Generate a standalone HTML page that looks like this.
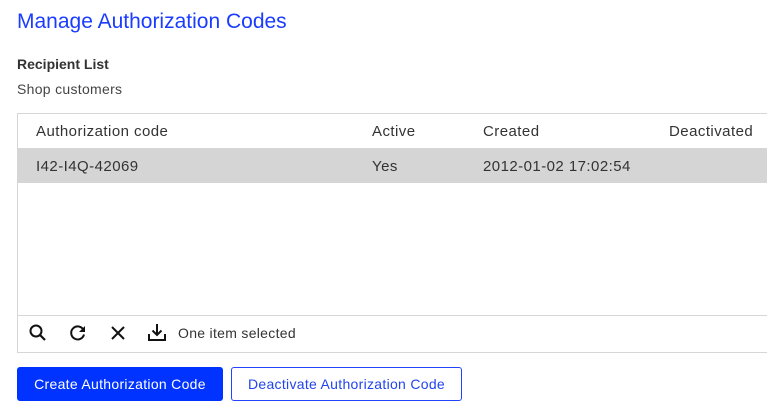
<!DOCTYPE html>
<html><head><style>
body{margin:0;width:767px;height:415px;background:#fff;font-family:"Liberation Sans",sans-serif;color:#333;position:relative;overflow:hidden}
.a{position:absolute;white-space:nowrap}
.t{font-size:15px;letter-spacing:0.45px}
</style></head><body>
<div class="a" style="left:17px;top:10px;font-size:21px;color:#1a3cff">Manage Authorization Codes</div>
<div class="a" style="left:17px;top:56px;font-size:14px;font-weight:bold;color:#333">Recipient List</div>
<div class="a" style="left:17px;top:81px;font-size:14px;letter-spacing:0.3px;color:#444">Shop customers</div>
<div class="a" style="left:17px;top:113px;width:760px;height:238px;border:1px solid #d6d6d6"></div>
<div class="a" style="left:18px;top:148px;width:760px;height:35px;background:#d5d5d5"></div>
<div class="a" style="left:18px;top:315px;width:760px;height:1px;background:#d6d6d6"></div>
<div class="a t" style="left:36px;top:123px">Authorization code</div>
<div class="a t" style="left:372px;top:123px">Active</div>
<div class="a t" style="left:483px;top:123px">Created</div>
<div class="a t" style="left:669px;top:123px">Deactivated</div>
<div class="a t" style="left:36px;top:158px">I42-I4Q-42069</div>
<div class="a t" style="left:372px;top:158px">Yes</div>
<div class="a t" style="left:483px;top:158px">2012-01-02 17:02:54</div>
<svg class="a" style="left:28px;top:323px" width="20" height="20" viewBox="0 0 20 20"><circle cx="8" cy="8" r="5.5" fill="none" stroke="#111" stroke-width="2"/><path d="M12 12l5 5" stroke="#111" stroke-width="2.2"/></svg>
<svg class="a" style="left:68px;top:323px" width="20" height="20" viewBox="0 0 20 20"><path d="M15.5 7A6.5 6.5 0 1 0 16 11.5" fill="none" stroke="#111" stroke-width="2"/><path d="M17 3v6h-6z" fill="#111"/></svg>
<svg class="a" style="left:108px;top:323px" width="20" height="20" viewBox="0 0 20 20"><path d="M4 4l12 12M16 4L4 16" stroke="#111" stroke-width="2"/></svg>
<svg class="a" style="left:147px;top:322px" width="20" height="20" viewBox="0 0 20 20"><path d="M2 12v6h16v-6M10 2v11M5.5 8.5L10 13l4.5-4.5" fill="none" stroke="#111" stroke-width="2"/></svg>
<div class="a" style="left:178px;top:325px;font-size:14px;letter-spacing:0.3px">One item selected</div>
<div class="a" style="left:17px;top:367px;width:206px;height:34px;background:#0033ff;border-radius:3px;color:#fff;font-size:14px;letter-spacing:0.3px;line-height:34px;text-align:center">Create Authorization Code</div>
<div class="a" style="left:231px;top:367px;width:229px;height:32px;border:1px solid #2244ff;border-radius:3px;color:#2244ee;font-size:14px;letter-spacing:0.3px;line-height:32px;text-align:center">Deactivate Authorization Code</div>
</body></html>
